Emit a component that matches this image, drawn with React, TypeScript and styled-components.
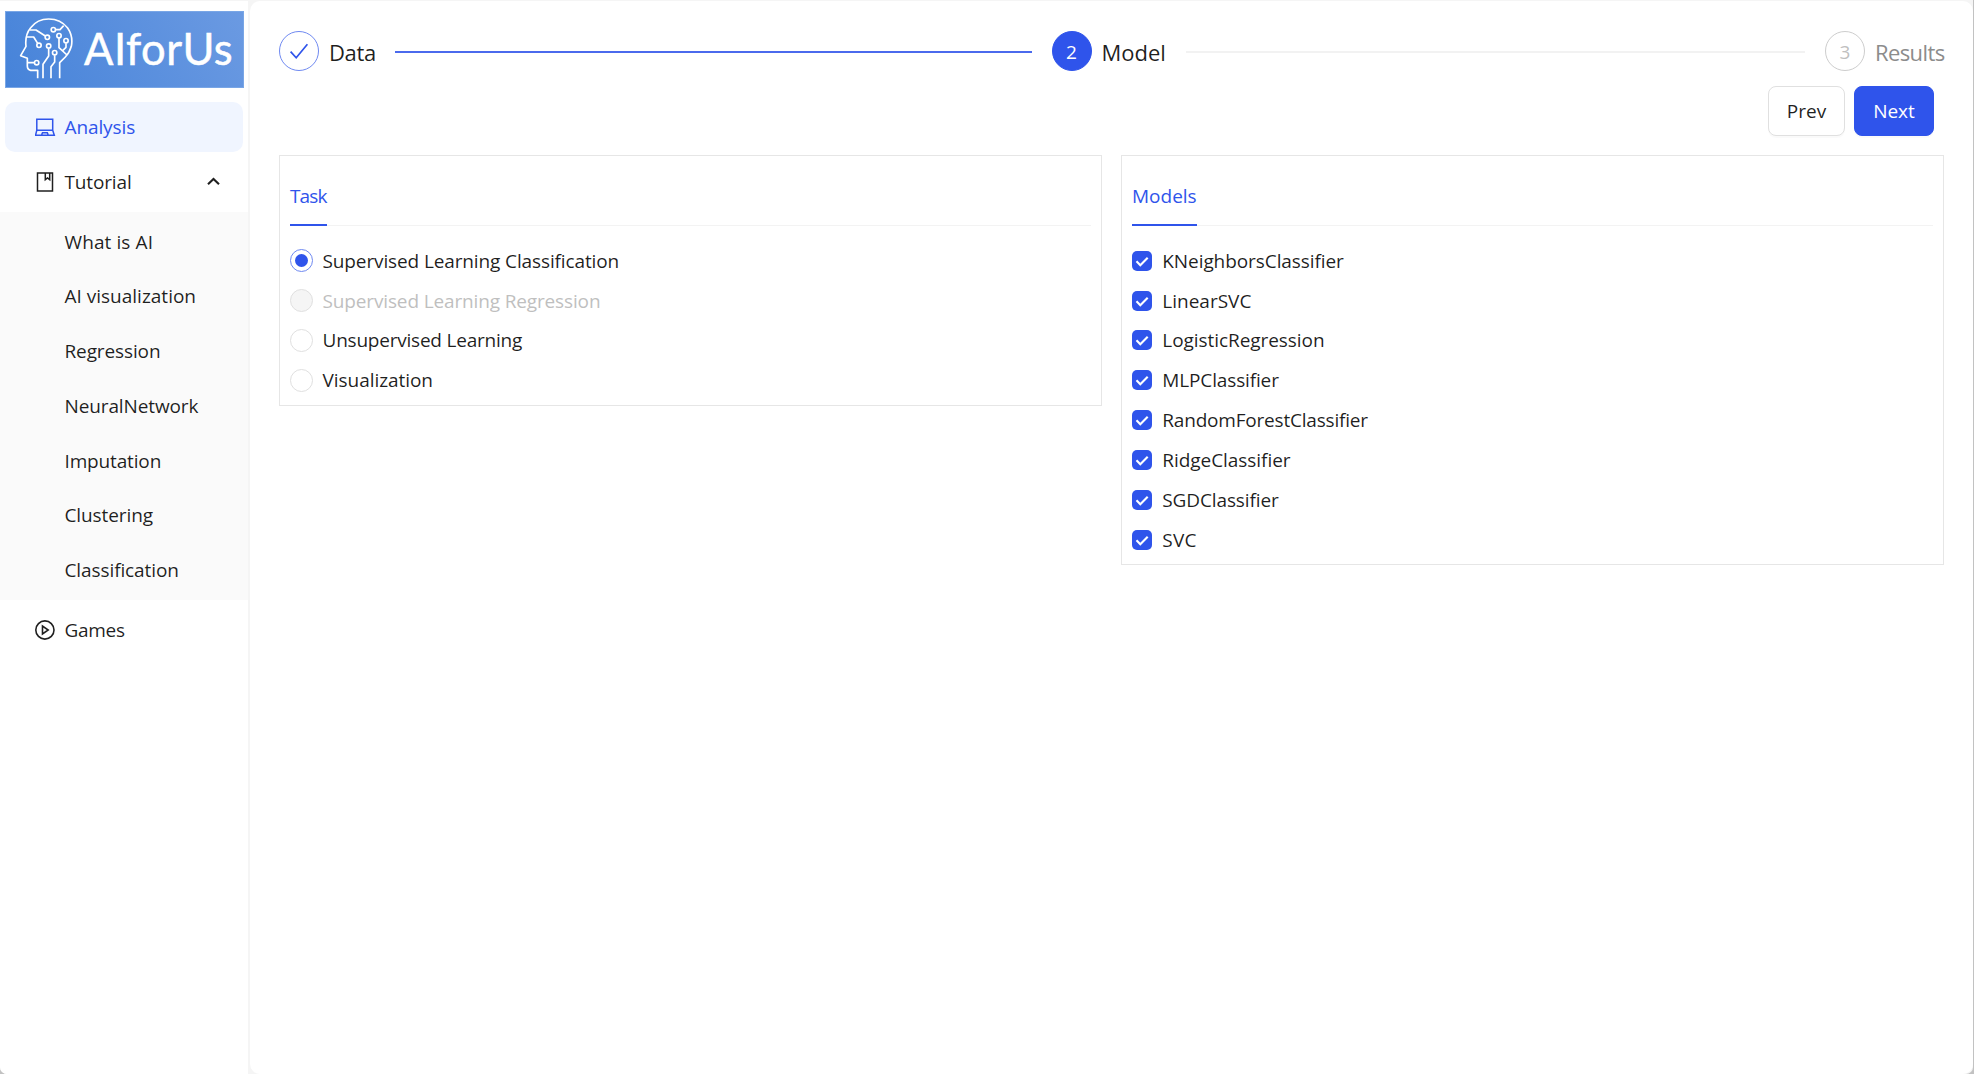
import React from "react";
import styled, { createGlobalStyle, css } from "styled-components";

const BLUE = "#2f54eb";
const INK = "rgba(0, 0, 0, 0.88)";

const Global = createGlobalStyle`
  *, *::before, *::after { box-sizing: border-box; }
  body {
    margin: 0;
    background: #c2c2c2;
    color: ${INK};
    font-family: "Open Sans", "Noto Sans", sans-serif;
    font-size: 19px;
    line-height: 30px;
  }
`;

const Frame = styled.div`
  display: flex;
  width: 1973px;
  height: 1074px;
  padding-top: 1px;
  gap: 2px;
  background: #f5f5f5;
  border-radius: 0 0 7px 7px;
  overflow: hidden;
`;

const Sider = styled.aside`
  width: 248px;
  background: #fff;
  padding-top: 9.5px;
  display: flex;
  flex-direction: column;
`;

const LogoBox = styled.div`
  display: flex;
  align-items: center;
  width: 239px;
  height: 77px;
  margin: 0 0 14.5px 5px;
  background: linear-gradient(60deg, #4683d9, #6b9ae2);
  border: 1px solid #79a6e6;
`;

const LogoMark = styled.svg`
  width: 55px;
  height: 64px;
  margin: 0 0 1px 13px;
  flex: none;
`;

const LogoText = styled.span`
  margin-left: 10px;
  padding-bottom: 3px;
  color: #fff;
  font-family: Lato, sans-serif;
  font-size: 43.5px;
  line-height: 60px;
  letter-spacing: 0.5px;
  -webkit-text-stroke: 0.5px #fff;
`;

const Label = styled.span<{ $ls?: number }>`
  white-space: nowrap;
  letter-spacing: ${(p) => p.$ls ?? 0}px;
`;

const MenuItem = styled.div<{ $active?: boolean }>`
  display: flex;
  align-items: center;
  height: 50px;
  margin: 0 5px 4.75px;
  padding: 0 23px 0 29.5px;
  gap: 9px;
  border-radius: 10px;
  ${(p) =>
    p.$active &&
    css`
      color: ${BLUE};
      background: #f0f5ff;
    `}
  > svg { flex: none; }
  > svg:last-child { margin-left: auto; }
`;

const SubMenu = styled.div`
  height: 388px;
  background: #fafafa;
  padding-top: 5px;
  margin-bottom: 5px;
  ${MenuItem} { padding-left: 59.5px; }
`;

const Main = styled.main`
  width: 1723px;
  background: #fff;
  border-radius: 10px;
  padding: 30px 29px 0;
`;

const Steps = styled.div`
  display: flex;
  align-items: center;
  height: 40px;
`;

const StepDot = styled.div<{ $state: "done" | "active" | "wait" }>`
  display: flex;
  align-items: center;
  justify-content: center;
  flex: none;
  width: 40px;
  height: 40px;
  margin-right: 10px;
  padding-top: ${(p) => (p.$state === "done" ? 0 : 1)}px;
  border-radius: 50%;
  border: 1px solid ${(p) => (p.$state === "wait" ? "#cdcdcd" : p.$state === "done" ? "#6f89f1" : BLUE)};
  background: ${(p) => (p.$state === "active" ? BLUE : "#fff")};
  color: ${(p) => (p.$state === "active" ? "#fff" : "#bfbfbf")};
`;

const StepTitle = styled.div<{ $width: number; $wait?: boolean; $ls?: number }>`
  flex: none;
  width: ${(p) => p.$width}px;
  padding-top: 1px;
  font-size: 22px;
  letter-spacing: ${(p) => p.$ls ?? 0}px;
  white-space: nowrap;
  color: ${(p) => (p.$wait ? "#8c8c8c" : INK)};
`;

const StepLine = styled.div<{ $done?: boolean; $width: number }>`
  width: ${(p) => p.$width}px;
  height: 2px;
  margin: 2px 20px 0;
  background: ${(p) => (p.$done ? "#4b6aed" : "#f2f2f2")};
`;

const Actions = styled.div`
  display: flex;
  justify-content: flex-end;
  gap: 9px;
  padding: 15px 10px 0 0;
`;

const Button = styled.button<{ $primary?: boolean }>`
  width: ${(p) => (p.$primary ? 80 : 77)}px;
  height: 50px;
  padding: 0 0 1px;
  border-radius: 8px;
  border: 1px solid ${(p) => (p.$primary ? BLUE : "#e0e0e0")};
  background: ${(p) => (p.$primary ? BLUE : "#fff")};
  color: ${(p) => (p.$primary ? "#fff" : INK)};
  font: inherit;
  box-shadow: 0 2px 0 rgba(0, 0, 0, 0.02);
`;

const Columns = styled.div`
  display: grid;
  grid-template-columns: 823px 823px;
  gap: 19px;
  align-items: start;
  margin-top: 19px;
`;

const Card = styled.section`
  border: 1px solid #e6e6e6;
  padding: 20px 10px 4.7px;
`;

const TabBar = styled.div`
  display: flex;
  height: 50px;
  margin-bottom: 14.8px;
  box-shadow: inset 0 -1px 0 #f3f3f3;
`;

const Tab = styled.div<{ $width: number; $ls?: number }>`
  width: ${(p) => p.$width}px;
  height: 50px;
  padding-top: 5px;
  color: ${BLUE};
  letter-spacing: ${(p) => p.$ls ?? 0}px;
  border-bottom: 2px solid ${BLUE};
`;

const OptionRow = styled.label<{ $disabled?: boolean }>`
  display: flex;
  align-items: center;
  height: 39.85px;
  gap: 9.5px;
  color: ${(p) => (p.$disabled ? "#bfbfbf" : INK)};
`;

const Radio = styled.span<{ $checked?: boolean; $disabled?: boolean }>`
  display: flex;
  align-items: center;
  justify-content: center;
  width: 23px;
  height: 23px;
  border-radius: 50%;
  border: 1px solid ${(p) => (p.$checked ? "#6f89f1" : "#e0e0e0")};
  background: ${(p) => (p.$disabled ? "#f5f5f5" : "#fff")};
  &::after {
    content: "";
    width: 13px;
    height: 13px;
    border-radius: 50%;
    background: ${(p) => (p.$checked ? BLUE : "transparent")};
  }
`;

const Checkbox = styled.span`
  display: flex;
  align-items: center;
  justify-content: center;
  width: 20px;
  height: 20px;
  margin-right: 0.8px;
  border-radius: 5px;
  background: ${BLUE};
`;

const HeadMark = () => (
  <LogoMark viewBox="57 50 165 192" fill="none" stroke="#fff" strokeWidth="5" strokeLinejoin="round">
    <path d="M113 234V210H92Q82 208 82 197V174L62 166L78 138Q74 104 92 82Q112 56 146 56Q182 56 203 83Q220 108 214 138Q208 158 196 170L179 187V234" />
    <path d="M90 89H108L136 107M80 110H101L113 129M82 187H102" />
    <path d="M129 234V192L146 167V145M153 234V199L164 185V165" />
    <path d="M168 88H180L191 76M177 113V142L201 164M198 129V141L188 151" />
    <circle cx="142" cy="111" r="6.5" />
    <circle cx="117" cy="135" r="6.5" />
    <circle cx="110" cy="187" r="6.5" />
    <circle cx="146" cy="137" r="6.5" />
    <circle cx="164" cy="157" r="6.5" />
    <circle cx="160" cy="88" r="6.5" />
    <circle cx="177" cy="106" r="6.5" />
    <circle cx="198" cy="121" r="6.5" />
  </LogoMark>
);

const LaptopIcon = () => (
  <svg width="21" height="20" viewBox="0.5 0 21 20" fill="none" stroke="currentColor" strokeWidth="1.5">
    <path d="M2.3 13.2V2.3H18.2V13.2M2.3 13.2H18.2L19.8 18.2H1L2.3 13.2ZM7.2 17.6L8 15.8H12.8L13.6 17.6" />
  </svg>
);

const BookIcon = () => (
  <svg width="21" height="20" viewBox="0.5 0 21 20" fill="none" stroke="currentColor" strokeWidth="1.5">
    <path d="M3 .9H18V19.1H3ZM10.8 1V7.6L13 5.9L15.2 7.6V1" />
  </svg>
);

const PlayIcon = () => (
  <svg width="21" height="20" viewBox="0.5 0 21 20" fill="none" stroke="currentColor" strokeWidth="1.6">
    <circle cx="10.4" cy="10" r="9.1" />
    <path d="M8 6V14L13.7 10Z" />
  </svg>
);

const UpIcon = () => (
  <svg width="13" height="9" viewBox="0 0 13 9" fill="none" stroke="currentColor" strokeWidth="2.1">
    <path d="M1 7.3L6.5 2L12 7.3" />
  </svg>
);

const DoneIcon = () => (
  <svg width="20" height="18" viewBox="0 0 20 18" fill="none" stroke={BLUE} strokeWidth="1.7">
    <path d="M1.6 9.6L7.2 15.8L18.4 2.2" />
  </svg>
);

const TickIcon = () => (
  <svg width="14" height="12" viewBox="0 0 14 12" fill="none" stroke="#fff" strokeWidth="2.1">
    <path d="M1.5 6.3L5.3 10.3L12.7 2.7" />
  </svg>
);

const pages: [string, number][] = [
  ["What is AI", 0.1],
  ["AI visualization", 0],
  ["Regression", -0.12],
  ["NeuralNetwork", -0.12],
  ["Imputation", -0.15],
  ["Clustering", -0.1],
  ["Classification", -0.1],
];

const tasks: { name: string; ls: number; checked?: boolean; disabled?: boolean }[] = [
  { name: "Supervised Learning Classification", ls: -0.12, checked: true },
  { name: "Supervised Learning Regression", ls: -0.14, disabled: true },
  { name: "Unsupervised Learning", ls: -0.22 },
  { name: "Visualization", ls: -0.05 },
];

const models: [string, number][] = [
  ["KNeighborsClassifier", -0.08],
  ["LinearSVC", 0],
  ["LogisticRegression", -0.06],
  ["MLPClassifier", -0.14],
  ["RandomForestClassifier", -0.2],
  ["RidgeClassifier", -0.05],
  ["SGDClassifier", -0.12],
  ["SVC", 0.2],
];

export default function App() {
  return (
    <>
      <Global />
      <Frame>
        <Sider>
          <LogoBox>
            <HeadMark />
            <LogoText>AIforUs</LogoText>
          </LogoBox>
          <MenuItem $active>
            <LaptopIcon />
            <Label $ls={-0.1}>Analysis</Label>
          </MenuItem>
          <MenuItem>
            <BookIcon />
            <Label $ls={-0.15}>Tutorial</Label>
            <UpIcon />
          </MenuItem>
          <SubMenu>
            {pages.map(([name, ls]) => (
              <MenuItem key={name}>
                <Label $ls={ls}>{name}</Label>
              </MenuItem>
            ))}
          </SubMenu>
          <MenuItem>
            <PlayIcon />
            <Label $ls={-0.3}>Games</Label>
          </MenuItem>
        </Sider>
        <Main>
          <Steps>
            <StepDot $state="done">
              <DoneIcon />
            </StepDot>
            <StepTitle $width={46} $ls={-0.35}>Data</StepTitle>
            <StepLine $done $width={637} />
            <StepDot $state="active">2</StepDot>
            <StepTitle $width={64}>Model</StepTitle>
            <StepLine $width={620} />
            <StepDot $state="wait">3</StepDot>
            <StepTitle $width={69} $wait $ls={-0.6}>
              Results
            </StepTitle>
          </Steps>
          <Actions>
            <Button>Prev</Button>
            <Button $primary>Next</Button>
          </Actions>
          <Columns>
            <Card>
              <TabBar>
                <Tab $width={37} $ls={-0.9}>Task</Tab>
              </TabBar>
              {tasks.map((t) => (
                <OptionRow key={t.name} $disabled={t.disabled}>
                  <Radio $checked={t.checked} $disabled={t.disabled} />
                  <Label $ls={t.ls}>{t.name}</Label>
                </OptionRow>
              ))}
            </Card>
            <Card>
              <TabBar>
                <Tab $width={65}>Models</Tab>
              </TabBar>
              {models.map(([name, ls]) => (
                <OptionRow key={name}>
                  <Checkbox>
                    <TickIcon />
                  </Checkbox>
                  <Label $ls={ls}>{name}</Label>
                </OptionRow>
              ))}
            </Card>
          </Columns>
        </Main>
      </Frame>
    </>
  );
}
